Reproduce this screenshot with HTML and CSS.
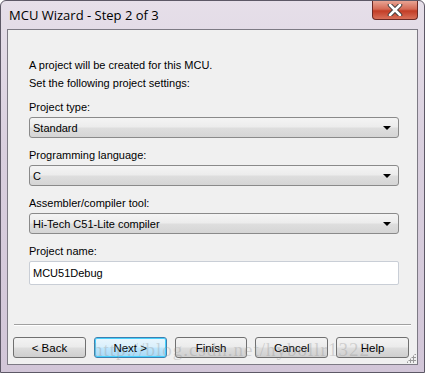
FILE: index.html
```
<!DOCTYPE html>
<html lang="en">
<head>
  <meta charset="UTF-8">
  <title>MCU Wizard - Step 2 of 3</title>
  <link rel="stylesheet" href="styles.css">
</head>
<body>
  <div class="window">
    <div class="titlebar">
      <span class="title">MCU Wizard - Step 2 of 3</span>
      <div class="close">
        <svg width="16" height="12" viewBox="0 0 16 12">
          <path d="M3 1 L13 11 M13 1 L3 11" stroke="#3a3a3a" stroke-width="4.5" stroke-linecap="round"/>
          <path d="M3 1 L13 11 M13 1 L3 11" stroke="#ffffff" stroke-width="2.6" stroke-linecap="round"/>
        </svg>
      </div>
    </div>

    <div class="client">
      <div class="intro">
        <p>A project will be created for this MCU.</p>
        <p>Set the following project settings:</p>
      </div>

      <div class="field">
        <label>Project type:</label>
        <div class="combo"><span>Standard</span><i class="arrow"></i></div>
      </div>
      <div class="field">
        <label>Programming language:</label>
        <div class="combo"><span>C</span><i class="arrow"></i></div>
      </div>
      <div class="field">
        <label>Assembler/compiler tool:</label>
        <div class="combo"><span>Hi-Tech C51-Lite compiler</span><i class="arrow"></i></div>
      </div>
      <div class="field">
        <label>Project name:</label>
        <div class="textbox">MCU51Debug</div>
      </div>

      <div class="separator"></div>

      <div class="buttons">
        <button>&lt; Back</button>
        <button class="default">Next &gt;</button>
        <button>Finish</button>
        <button>Cancel</button>
        <button>Help</button>
      </div>
      <div class="watermark">http://blog.csdn.net/hybollr1322</div>
      <div class="grip"></div>
    </div>
  </div>
</body>
</html>
```

FILE: styles.css
```
body {
  margin: 0;
  padding: 0;
  background: #ffffff;
  font-family: "Liberation Sans", Arial, sans-serif;
}
.window {
  position: relative;
  width: 425px;
  height: 373px;
  box-sizing: border-box;
  border: 1px solid #5d5866;
  border-radius: 6px 6px 0 0;
  background: linear-gradient(to bottom, #e6dfe9, #d9cfde 40%, #d2c6d8);
  display: flex;
  flex-direction: column;
}
.titlebar {
  height: 28px;
  display: flex;
  align-items: flex-start;
  justify-content: space-between;
}
.title {
  font-family: "Open Sans", "DejaVu Sans", sans-serif;
  font-size: 13px;
  color: #000;
  margin: 5px 0 0 8px;
}
.close {
  width: 44px;
  height: 18px;
  margin-right: 6px;
  border: 1px solid #6b2a25;
  border-top: none;
  border-radius: 0 0 4px 4px;
  background: linear-gradient(to bottom, #e8a493, #d46a55 45%, #c23d26 55%, #d8705a);
  display: flex;
  align-items: center;
  justify-content: center;
}
.client {
  position: relative;
  margin: 0 6px;
  height: 336px;
  box-sizing: border-box;
  border: 1px solid #7d7a84;
  background: #f0f0f0;
  padding: 29px 18px 0 21px;
  font-size: 11px;
  color: #000;
}
.intro p {
  margin: 0 0 5px;
  line-height: 13px;
}
.field {
  margin-top: 11px;
}
.field label {
  display: block;
  line-height: 13px;
  margin-bottom: 3px;
}
.combo {
  height: 19px;
  border: 1px solid #8a8a8a;
  border-radius: 3px;
  background: linear-gradient(to bottom, #f4f4f4, #ececec 48%, #dedede 52%, #d5d5d5);
  display: flex;
  align-items: center;
  justify-content: space-between;
  padding: 0 7px 0 3px;
}
.arrow {
  width: 0;
  height: 0;
  border-left: 4px solid transparent;
  border-right: 4px solid transparent;
  border-top: 4px solid #000;
}
.textbox {
  height: 22px;
  border: 1px solid #c9ced6;
  border-radius: 2px;
  background: #fff;
  line-height: 22px;
  padding-left: 3px;
}
.separator {
  position: absolute;
  left: 6px;
  right: 6px;
  top: 294px;
  border-top: 1px solid #a0a0a0;
  border-bottom: 1px solid #fff;
}
.buttons {
  position: absolute;
  left: 5px;
  right: 8px;
  top: 307px;
  display: flex;
  gap: 8px;
}
.buttons button {
  width: 73px;
  height: 21px;
  border: 1px solid #707070;
  border-radius: 3px;
  background: linear-gradient(to bottom, #f3f3f3, #ebebeb 48%, #dddddd 52%, #cfcfcf);
  font-family: "Liberation Sans", Arial, sans-serif;
  font-size: 11.5px;
  color: #000;
  padding: 0;
}
.buttons button.default {
  border-color: #3c7fb1;
  box-shadow: inset 0 0 0 1px #48d1fc;
  background: linear-gradient(to bottom, #eaf6fd, #d9f0fc 48%, #bee6fd 52%, #a7d9f5);
}
.watermark {
  position: absolute;
  left: 85px;
  top: 309px;
  font-family: "Liberation Serif", serif;
  font-size: 19px;
  color: rgba(150, 150, 150, 0.35);
  letter-spacing: 1px;
  pointer-events: none;
}
.grip {
  position: absolute;
  right: 1px;
  bottom: 1px;
  width: 10px;
  height: 10px;
  background-image: radial-gradient(circle, #9a9a9a 1px, transparent 1.2px);
  background-size: 3px 3px;
  clip-path: polygon(100% 0, 100% 100%, 0 100%);
}
```
